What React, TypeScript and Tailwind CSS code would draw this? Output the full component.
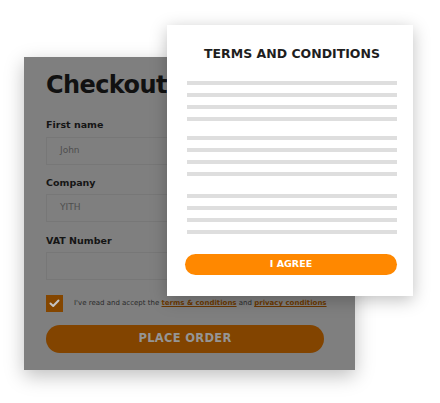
export default function App() {
  const groups = [4, 4, 4];

  return (
    <div className="relative w-[440px] h-[403px] bg-white overflow-hidden font-['DejaVu_Sans',sans-serif]">
      {/* Checkout card (dimmed) */}
      <div className="ml-[24px] mt-[57px] w-[331px] h-[313px] bg-[#7f7f7f] shadow-[0_6px_18px_rgba(0,0,0,0.25)] px-[22px] pt-[15px]">
        <h1 className="text-[24px] leading-[26px] font-bold text-[#111] tracking-[-0.6px]">Checkout</h1>

        <div className="mt-[21px] text-[9.5px] leading-[12px] font-bold text-[#151515]">First name</div>
        <div className="mt-[6px] w-[278px] h-[28px] border border-[#777] flex items-center px-[13px] text-[9px] text-[#4e4e4e]">
          John
        </div>

        <div className="mt-[12px] text-[9.5px] leading-[12px] font-bold text-[#151515]">Company</div>
        <div className="mt-[5px] w-[278px] h-[28px] border border-[#777] flex items-center px-[13px] text-[9px] text-[#4e4e4e]">
          YITH
        </div>

        <div className="mt-[13px] text-[9.5px] leading-[12px] font-bold text-[#151515]">VAT Number</div>
        <div className="mt-[5px] w-[278px] h-[28px] border border-[#777]" />

        <div className="mt-[15px] flex items-center gap-[11px]">
          <div className="w-[17px] h-[17px] bg-[#844600] flex items-center justify-center">
            <svg width="11" height="9" viewBox="0 0 11 9" fill="none">
              <path d="M1.5 4.5 L4.2 7 L9.5 1.5" stroke="#c4c4c4" strokeWidth="2" strokeLinecap="round" strokeLinejoin="round" />
            </svg>
          </div>
          <p className="text-[7px] text-[#2a2a2a] whitespace-nowrap">
            I've read and accept the{" "}
            <span className="font-bold text-[#6b3800] underline">terms &amp; conditions</span> and{" "}
            <span className="font-bold text-[#6b3800] underline">privacy conditions</span>
          </p>
        </div>

        <button className="mt-[13px] w-[278px] h-[28px] rounded-full bg-[#824400] text-[11.5px] font-bold text-[#959595] tracking-[0.3px]">
          PLACE ORDER
        </button>
      </div>

      {/* Terms modal */}
      <div className="absolute left-[167px] top-[25px] w-[246px] h-[271px] bg-white shadow-[0_4px_16px_rgba(0,0,0,0.25)] pl-[20px] pr-[16px] pt-[21px]">
        <h2 className="text-center text-[12.5px] leading-[16px] font-bold text-[#1e1e1e]">
          TERMS AND CONDITIONS
        </h2>

        <div className="mt-[19px] flex flex-col">
          {groups.map((n, g) => (
            <div key={g} className={`flex flex-col gap-[8px] ${g === 1 ? "mt-[15px]" : g === 2 ? "mt-[18px]" : ""}`}>
              {Array.from({ length: n }).map((_, i) => (
                <div key={i} className="h-[4px] w-[210px] bg-[#dedede]" />
              ))}
            </div>
          ))}
        </div>

        <button className="mt-[20px] -ml-[2px] w-[212px] h-[21px] rounded-full bg-[#ff8800] text-white text-[9.5px] font-bold">
          I AGREE
        </button>
      </div>
    </div>
  );
}
